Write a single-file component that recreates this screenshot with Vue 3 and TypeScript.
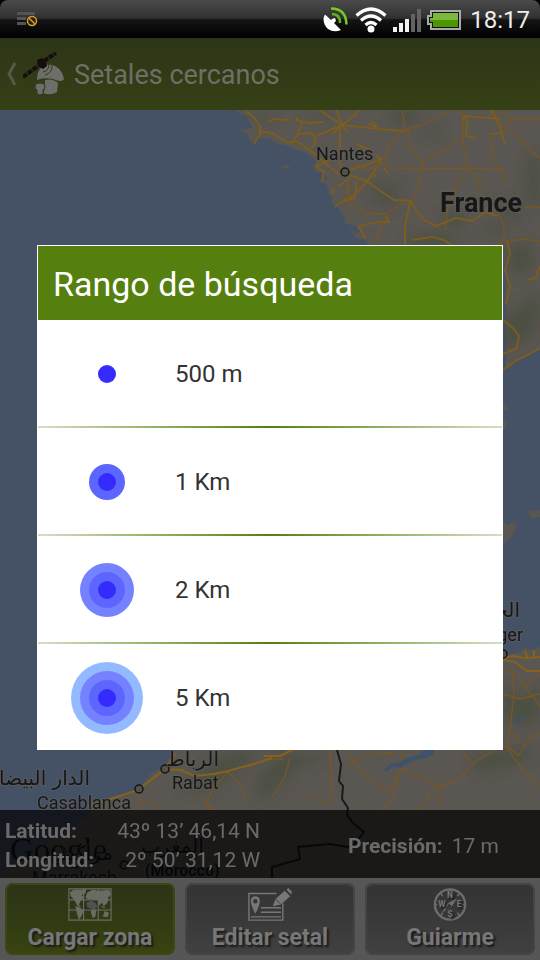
<script setup lang="ts">
import { ref } from 'vue'

interface RangeOption {
  label: string
  metres: number
  rings: { r: number; fill: string }[]
}

const rings = [
  { r: 9, fill: '#352bff' },
  { r: 18, fill: '#5c66ff' },
  { r: 27, fill: '#7482ff' },
  { r: 36, fill: '#93baff' },
]

const options: RangeOption[] = [
  { label: '500 m', metres: 500 },
  { label: '1 Km', metres: 1000 },
  { label: '2 Km', metres: 2000 },
  { label: '5 Km', metres: 5000 },
].map((o, i) => ({ ...o, rings: rings.slice(0, i + 1).reverse() }))

const selected = ref<number | null>(null)

const majorRoads = [
  'M246 111l8 7 6 8v8l-6 10M260 131l14 3 14 9 8-2 18 12 16 14 10 8M292 143l6-9 14-1 4 7-4 8M298 134l4-11-6-5M316 136l26-11 36 4 22 2 9-1M342 125l-24-16M342 125l-7-18M340 126v40l4 8M342 125l6 8M342 125l-10 9M342 125l14-11 8-12M378 129l-6-8M378 129l-10-6',
  'M268 122l6-3 16 1M296 120l12 3 16-1M349 170l20-6 14-6M349 175l18 6 15 11 12 8 18 1M330 160l-14 6 8 6-2 10M338 186l12-8M367 182l-14 14-8 3 10-3 2-14M367 182l8-12 6-10-5-6M356 144l14 6M384 168l4 6M373 177l3-2',
  'M355 198l-14 4-6 5M359 226l6 12M359 226l20-4h10l-3-6M410 202l-5 24v22M410 202l14 18 12 6 20-8 16 3 14-9 12 4',
  'M412 240l20-3 12 3 12 8M505 144l-6-20-10-18M500 119l-36-3v6M468 116l-2 20 10 2M490 134l12-1M349 184l-2 10M334 188l-1 6',
  'M503 370l14-10 14-7 9-5M503 354l14-6 2-12-6-8-10-8M507 240l3 14-5 16 5 16-4 18M528 280l8-2 4-12',
]

const minorRoads = [
  'M402 110l3 18-16 18-5 16 14 6 12 1h14l40-1 40 2M405 130l18-5 27-14M409 130v16l14 16-2 10-3 18-6 12M404 202l-18 12-20-1-14-8-4-8 1-16-10-16M386 215l-6 14-6 16',
  'M462 110l2 40 4 18M464 136l-20 15-22 12M490 105l14 25 12 4 18 20 6 4M505 130l6-11 30 0M510 119l-14-12M490 134l4 26 12 22M468 168l12 14v14M467 168l-10 16-9 24-3 22M498 212l6 14v14l-14 10M504 242l18-3 18 2',
  'M525 207h15M384 162l-15 8-14-6',
  'M503 668l14 8 8 10 15-12M503 694l18 5 19-5M512 669l2 22-3 30-4 29M517 676l12 16 11 14M503 728l12 8 4 8M519 756l-12-10-12 4-20 12-20 20-16 4-16-8-22-10-8 30-14 16',
  'M507 747l16 24 17 14M519 756l8-16 13-8M495 750l-10-10M471 762l-10-12M438 785l-10 10-2 9-22 12M440 786v22M402 750v18l-13 24-25-18-12-16-8-10M346 766l14-8 20-6 16 2',
  'M330 750l2 40-3 14-14-5-12-5M290 759l-6 20-12 18M270 759h14M139 791v22M141 800l20 8M228 772l-16 18-5 12 8 14M228 772l12 12 6 14M203 798l7 12M300 110',
]

const mapActions = [
  { id: 'load', label: 'Cargar zona' },
  { id: 'edit', label: 'Editar setal' },
  { id: 'guide', label: 'Guiarme' },
]
</script>

<template>
  <div class="screen">
    <header class="status">
      <svg class="s-note" width="22" height="18" viewBox="0 0 22 18" aria-hidden="true">
        <path d="M0 2.500h18M0 7.500h9M0 12.500h9" stroke="#545454" stroke-width="3" />
        <circle cx="15" cy="10" r="4.500" fill="#262015" stroke="#d8a028" stroke-width="1.500" />
        <path d="M12 7l6 6" stroke="#d8a028" stroke-width="1.500" />
      </svg>
      <div class="s-right">
        <svg width="26" height="26" viewBox="0 0 26 26" aria-hidden="true">
          <path d="M2 7.500C-1 12 1 19 5 22q6 4 13 1l-7-7 2-2-1-3-3 1-1 1z" fill="#fff" />
          <path d="M9 7q8 0 8 9" fill="none" stroke="#62b51d" stroke-width="2.500" />
          <path d="M8 1.500q15 0 15.500 16" fill="none" stroke="#75c928" stroke-width="2.500" />
        </svg>
        <svg width="32" height="26" viewBox="0 0 32 26" aria-hidden="true">
          <g fill="none" stroke="#fff" stroke-width="3.200">
            <path d="M1.500 8.500q14.500-13 29 0M6 13.500q10-9 20 0M10.500 18q5.500-5 11 0" />
          </g>
          <circle cx="16" cy="22" r="3.500" fill="#fff" />
        </svg>
        <svg width="28" height="24" viewBox="0 0 28 24" aria-hidden="true">
          <path d="M0 19h4v5H0zM6 15h4v9H6zM12 11h4v13h-4z" fill="#f2f2f2" />
          <path d="M18 6h4v18h-4zM24 1h4v23h-4z" fill="#626262" />
        </svg>
        <svg width="34" height="20" viewBox="0 0 34 20" aria-hidden="true">
          <path d="M4 1h29v18H4v-5H1V6h3z" fill="#111" stroke="#aaa" stroke-width="2" />
          <path d="M6 3h25v7H3V8h3z" fill="#79b93d" />
          <path d="M3 10h28v7H6v-5H3z" fill="#4c9600" />
        </svg>
        <time>18:17</time>
      </div>
    </header>

    <nav class="title-bar">
      <button class="back" type="button" aria-label="Atrás">
        <svg width="12" height="24" viewBox="0 0 12 24"><path d="M9 1L3 12l6 11" fill="none" stroke="#555a48" stroke-width="3" /></svg>
      </button>
      <svg class="logo" width="42" height="44" viewBox="0 0 42 44" aria-hidden="true">
        <path d="M14 28Q14 14 25 12.500Q38 13 41 27Q39 31 30 27Q20 25 14 28z" fill="#6d6e6a" />
        <path d="M22 28q8-2 13 3l-1 9q-6 4-14 1l2-4z" fill="#6d6e6a" />
        <path d="M12 35q0-4 5-4t5 4q0 2-2 3v4q-3 2-6 0v-4q-2-1-2-3z" fill="#6d6e6a" stroke="#30391a" />
        <path d="M20 20q6-1 6-8M22 23q8-2 7-11" fill="none" stroke="#30391a" stroke-width="1" />
        <path d="M0 25l15-11M21 9L33 1" stroke="#160d0d" stroke-width="4" stroke-dasharray="5 1" />
        <path d="M14 8l5-2 4 4 1 4-4 3-5-3z" fill="#160d0d" />
      </svg>
      <h1>Setales cercanos</h1>
    </nav>

    <main class="map">
      <svg class="map-art" viewBox="0 110 540 768" preserveAspectRatio="xMidYMin slice" aria-label="Mapa">
        <defs>
          <filter id="relief" x="-20%" y="-20%" width="140%" height="140%"><feGaussianBlur stdDeviation="6" /></filter>
          <clipPath id="land-clip">
            <path d="M235 110H540V345L520 358L503 368H362V228L330 176L280 142zM503 655H540V878H60L139 789L177 745H503z" />
          </clipPath>
        </defs>
        <rect y="110" width="540" height="768" fill="#455266" />
        <g fill="#5a5651">
          <path d="M235 110l5 4 6 2 4 7 2 5-14 2 9 4 3 7 3 1 4-4 12 1 10 5 9 2 6 4 8 1 7 4 7 6-2 5 1 6 8 1 5 5-5 2-5-1 8 5 3 6-1 4 5 3-2 5 4 3 4 2 1 6 5 4-1 5 6 3 6 1 4 6-5 2 5 5 6 1 3 7-3 6v10h140V368l7-6 10-4 10-6 10-7V110z" />
          <path d="M350 229l6 4 4 6-4-1zM281 166l6-1 4 3-5 1zM278 151l3 1-2 1zM317 197l4 2-4-1zM503 403l5 6-5 2zM503 420l4 3-2 5-2 2zM503 520l4 5 8-3 1 7-7 11-6 3zM528 511l12-1v7l-9 1z" />
          <path d="M173 740v12l-7 13-15 9-10 12-13 9-30 6-12 16-25 18-61 38v5h540V647l-8 3-7-2-8 5-22 2v85z" />
        </g>
        <g clip-path="url(#land-clip)" fill="#485041" filter="url(#relief)" opacity=".8">
          <path d="M390 110h30l-5 12-22 3zM527 155h13v50h-12l-2-24zM410 236l28-3 20 5-4 10h-50zM508 248l22-6 4 22-14 12-12-10zM503 318l22-16 15-10v30l-16 20-21 8zM440 215l20-4 8 12-18 6zM480 228l20-6 5 16z" />
          <path d="M246 112h30l-10 10-14-4zM300 112h30v10zM372 180l30 6-10 24-20-10zM420 130l24-4-6 14zM500 200l26 6-10 20-16-6z" opacity=".7" />
          <path d="M503 685l14 15 23-12v30l-20 8-17-8zM215 758l26-8 18 4-20 16-24 18-34 4zM470 758l28-8h40l-18 14-40 10zM280 752l50 6-30 8-28 28-16 6 4-24z" />
        </g>
        <g fill="none" stroke="#7a5d1f" stroke-width="2" stroke-linejoin="round">
          <path v-for="d in majorRoads" :key="d" :d="d" />
        </g>
        <g fill="none" stroke="#775726" stroke-width="1.300" stroke-linejoin="round">
          <path v-for="d in minorRoads" :key="d" :d="d" />
        </g>
        <path d="M88 806l50-16 27-21 10-15M165 769l16 1 13 6 20-2 14-3 26-7 18-6M264 756l16 0 14-7M503 658l10-2 12 2 15-1M503 660l12 2 12 9h13M525 651l3 8M534 650v9" fill="none" stroke="#87611d" stroke-width="2" />
        <path d="M384 770l6-6 8-1 10-5 13-4 3-5h10v5l-8 4-12 2-14 8-6-2-8 6zM514 724l4-6 7-2-3 5-6 2z" fill="#3e526d" />
        <path d="M337 750l4 14-2 17 4 5-1 13 6 9-1 7 6 8 11 9-12 15-4 0-18-3-32 3 2 12-28 8v11" fill="none" stroke="#1b1a1b" stroke-width="2" />
        <g class="pins">
          <circle cx="345" cy="172" r="4" />
          <circle cx="139" cy="789" r="4" />
          <circle cx="165" cy="769" r="4" />
          <circle cx="124" cy="865" r="4" />
          <circle cx="503" cy="654" r="4" />
        </g>
        <g class="labels">
          <text x="316" y="160">Nantes</text>
          <text x="440" y="212" class="country">France</text>
          <text x="523" y="641" text-anchor="end">Alger</text>
          <text x="520" y="617" text-anchor="end" class="arabic">الجزائر</text>
          <text x="219" y="766" text-anchor="end" class="arabic">الرباط</text>
          <text x="172" y="789">Rabat</text>
          <text x="90" y="785" text-anchor="end" class="arabic">الدار البيضاء</text>
          <text x="37" y="809">Casablanca</text>
          <text x="10" y="861" class="brand">Google</text>
          <text x="113" y="860" text-anchor="end" class="arabic">مراكش</text>
          <text x="32" y="884">Marrakech</text>
          <text x="204" y="853" text-anchor="end" class="arabic">المغرب</text>
          <text x="145" y="876" class="region">(Morocco)</text>
        </g>
      </svg>

      <section class="position">
        <dl class="coords">
          <dt>Latitud:</dt>
          <dd>43º 13’ 46,14 N</dd>
          <dt>Longitud:</dt>
          <dd>2º 50’ 31,12 W</dd>
        </dl>
        <dl class="precision">
          <dt>Precisión:</dt>
          <dd>17 m</dd>
        </dl>
      </section>
    </main>

    <footer class="actions">
      <button v-for="a in mapActions" :key="a.id" type="button" class="action" :class="a.id">
        <svg v-if="a.id === 'load'" width="48" height="36" viewBox="0 0 48 36" aria-hidden="true">
          <path d="M2 5l4-3 8 0 3 3-2 3 3 2-4 4-2 4 2 3-4-2-3-6-4-4zM15 2l5-1-1 5-3 1zM8 20l5 1 4 4-2 5-3 5-2-6zM19 10l2-5 6-3 6 1 12-1 2 5-3 3-1 6-4 4-2-4-3 3-4-4-4-3-5 0zM25 22l6 1-1 8-3 2-2-6zM40 25l5 2-2 5-5-1zM35 19l6 2-2 1z" fill="#696d61" />
          <path d="M17 13h16v11H17z" fill="#2b2e24" />
          <path d="M20 16l5-2 5 2 2 4-3 4-3-1-5-2z" fill="#50534d" />
          <path d="M1 1h46v34H1zM1 13h46M1 24h46M17 1v34M33 1v34" fill="none" stroke="#6c6e66" stroke-width="1.200" />
        </svg>
        <svg v-else-if="a.id === 'edit'" width="48" height="36" viewBox="0 0 48 36" aria-hidden="true">
          <path d="M31 6H1v29h37V17" fill="none" stroke="#777" stroke-width="1.500" />
          <path d="M8 9a5 5 0 0 1 5 5q0 5-5 14q-5-9-5-14a5 5 0 0 1 5-5zm0 3a2.500 2.500 0 1 0 0 5a2.500 2.500 0 0 0 0-5z" fill="#777" fill-rule="evenodd" />
          <path d="M14 21.500h22M14 26.500h22M3 31.500h33" stroke="#777" stroke-width="1.500" />
          <path d="M27 20l3-8L40 3l6 6-10 9zM42 2l2-2 4 4-1 3z" fill="#777" />
          <path d="M30 12l6 6" stroke="#3a3a3a" />
        </svg>
        <svg v-else width="36" height="36" viewBox="0 0 36 36" aria-hidden="true">
          <circle cx="18" cy="18" r="16.500" fill="none" stroke="#6e6e6e" stroke-width="2.500" />
          <path d="M18 1v3M18 32v3M1 18h3M32 18h3M8 6l2 3M28 6l-2 3M8 30l2-3M28 30l-2-3" stroke="#6e6e6e" stroke-width="1.500" />
          <path d="M26 11l-6 9-11 7 6-10z" fill="#707070" />
          <path d="M17 17l3 3-7 4z" fill="#343434" />
          <g class="compass" text-anchor="middle">
            <text x="18" y="11">N</text><text x="9" y="21">W</text>
            <text x="28" y="21">E</text><text x="18" y="32">S</text>
          </g>
        </svg>
        <span>{{ a.label }}</span>
      </button>
    </footer>

    <div class="overlay">
      <section class="dialog" role="dialog" aria-labelledby="range-title">
        <h2 id="range-title">Rango de búsqueda</h2>
        <ul>
          <li v-for="o in options" :key="o.metres">
            <button type="button" :aria-pressed="selected === o.metres" @click="selected = o.metres">
              <svg width="72" height="72" viewBox="-36 -36 72 72" aria-hidden="true">
                <circle v-for="c in o.rings" :key="c.r" :r="c.r" :fill="c.fill" />
              </svg>
              <span>{{ o.label }}</span>
            </button>
          </li>
        </ul>
      </section>
    </div>
  </div>
</template>

<style>
body {
  margin: 0;
  background: #000;
}
</style>

<style scoped>
.screen {
  position: relative;
  display: flex;
  flex-direction: column;
  min-height: 100vh;
  overflow: hidden;
  font-family: Roboto, "Liberation Sans", sans-serif;
}
button {
  border: 0;
  padding: 0;
  background: none;
  font: inherit;
  color: inherit;
}
h1, h2, ul, dl, dd {
  margin: 0;
  padding: 0;
  font-weight: 400;
}
.status {
  display: flex;
  align-items: center;
  justify-content: space-between;
  height: 38px;
  padding: 2px 10px 0 17px;
  box-sizing: border-box;
  border-radius: 8px 8px 0 0;
  background: linear-gradient(#4b4b4b, #303030 48%, #141414 52%, #000);
}
.s-right {
  display: flex;
  align-items: center;
  gap: 6px;
}
.status time {
  padding-left: 3px;
  font-size: 24px;
  line-height: 36px;
  color: #eee;
}
.title-bar {
  display: flex;
  align-items: center;
  height: 72px;
  padding-left: 6px;
  background: linear-gradient(#2c3518, #364015);
  color: #6d7064;
}
.back {
  display: flex;
}
.logo {
  margin: 0 9px 0 5px;
}
h1 {
  padding-top: 2px;
  font-size: 27px;
  line-height: 36px;
}
.map {
  position: relative;
  flex: 1;
  display: flex;
  align-items: flex-end;
}
.map-art {
  position: absolute;
  inset: 0;
  width: 100%;
  height: 100%;
}
.pins {
  fill: #54514d;
  stroke: #151515;
  stroke-width: 1.5px;
}
.labels {
  font-size: 18px;
  fill: #171717;
  stroke: rgba(96, 94, 90, .6);
  stroke-width: 2px;
  paint-order: stroke;
}
.country {
  font-size: 27px;
  font-weight: 700;
}
.region {
  font-size: 16px;
  font-weight: 700;
}
.arabic {
  font-family: "DejaVu Sans", sans-serif;
  font-size: 20px;
}
.brand {
  font-family: "Liberation Serif", serif;
  font-size: 33px;
  stroke: none;
}
.position {
  position: relative;
  display: flex;
  flex: 1;
  align-items: center;
  justify-content: space-between;
  padding: 7px 41px 3px 5px;
  background: rgba(0, 0, 0, .7);
  font-size: 21px;
  line-height: 29px;
  color: #6a6a6a;
}
.coords {
  display: grid;
  grid-template-columns: auto auto;
  column-gap: 23px;
}
.coords dd {
  text-align: right;
}
.position dt {
  font-weight: 700;
}
.precision {
  display: flex;
  gap: 9px;
}
.actions {
  display: flex;
  gap: 10px;
  padding: 5px;
  background: #565656;
}
.action {
  flex: 1;
  display: flex;
  flex-direction: column;
  align-items: center;
  height: 72px;
  padding-top: 5px;
  box-sizing: border-box;
  border-radius: 8px;
  background: linear-gradient(#333, #393939 50%, #414141);
  box-shadow: inset 0 0 0 2px #444;
  font-size: 23px;
  font-weight: 700;
  line-height: 34px;
  color: #777;
  text-shadow: 2px 2px 2px #1a1a1a;
}
.action.load {
  background: linear-gradient(#2b3416, #303a14 50%, #394410);
  box-shadow: inset 0 0 0 2px #3c4713;
}
.compass {
  font-size: 9px;
  font-weight: 700;
  fill: #777;
}
.overlay {
  position: absolute;
  inset: 0;
  display: flex;
  align-items: center;
  padding: 35px 37px 0;
}
.dialog {
  flex: 1;
  padding: 1px 1px 0;
  background: #fff;
}
h2 {
  padding: 2px 15px 0;
  background: #55800f;
  font-size: 34px;
  line-height: 72px;
  color: #fff;
}
ul {
  list-style: none;
}
li + li {
  border-top: 2px solid;
  border-image: linear-gradient(90deg, #d5e0c4, #55800f 50%, #d5e0c4) 1;
}
li button {
  display: flex;
  align-items: center;
  gap: 32px;
  width: 100%;
  height: 106px;
  padding: 2px 0 0 33px;
  font-size: 24px;
  color: #333;
}
</style>
